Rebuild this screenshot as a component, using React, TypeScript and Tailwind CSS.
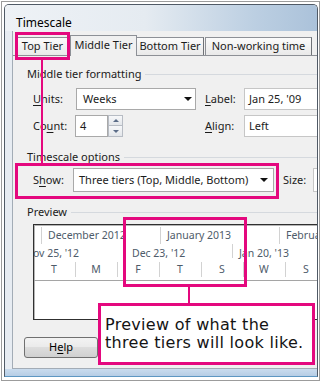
import React from "react";

const U = ({ children }: { children: React.ReactNode }) => (
  <span className="underline decoration-1 underline-offset-2">{children}</span>
);

function DownArrow() {
  return (
    <svg width="8" height="4" viewBox="0 0 8 4">
      <path d="M0 0h8L4 4z" fill="#111" />
    </svg>
  );
}

function Header({ text, mt }: { text: React.ReactNode; mt: string }) {
  return (
    <div className={`${mt} h-[14px] flex items-center pl-[14px] shrink-0`}>
      <span className="whitespace-nowrap leading-[14px]">{text}</span>
      <div className="flex-1 h-px bg-[#d5d9de] ml-[4px]" />
    </div>
  );
}

const PINK = "border-[#e4087e]";

export default function App() {
  const tierText = "text-[#4e5b6a]";
  return (
    <div className="relative w-[323px] h-[382px] bg-white pl-px pt-px overflow-hidden font-['Noto_Sans',sans-serif] text-[11px] text-[#1b1b1b]">
      <div className="w-[319px] h-[380px] border border-[#9c9c9c] pl-[2px] pt-[2px] pr-px pb-[3px]">
        <div className="h-full flex flex-col border border-[#505a66] border-b-[#5e97c2] rounded-t-[5px] overflow-hidden">
          {/* title bar */}
          <div className="h-[26px] shrink-0 pl-[11px] pt-[10px] leading-[16px] text-[12px] text-black bg-[linear-gradient(to_right,#eef2f6_0%,#e5ebf1_45%,#bccfe2_80%,#abc2da_100%)]">
            Timescale
          </div>
          <div className="h-[338px] shrink-0 flex">
            <div className="w-[7px] bg-[#e7ecf2]" />
            <div className="flex-1 min-w-0 bg-[#f0f0f0] border-l border-b border-[#a3acb6] flex flex-col overflow-hidden">
              {/* tabs */}
              <div className="h-[24px] shrink-0 flex items-end pl-[2px]">
                <div className="w-[55px] h-[18px] border border-b-0 border-[#8d9096] bg-[linear-gradient(#fbfbfb,#e9e9e9)] flex items-center justify-center whitespace-nowrap">
                  Top Tier
                </div>
                <div className="relative z-10 -mb-px w-[67px] h-[21px] border border-b-0 border-[#8d9096] bg-[#f0f0f0] flex items-center justify-center whitespace-nowrap pb-[2px]">
                  Middle Tier
                </div>
                <div className="w-[67px] h-[18px] border border-b-0 border-l-0 border-[#8d9096] border-r-[#6f7277] bg-[linear-gradient(#fbfbfb,#e9e9e9)] flex items-center justify-center whitespace-nowrap">
                  Bottom Tier
                </div>
                <div className="ml-px w-[107px] h-[18px] border border-b-0 border-[#8d9096] border-r-[#6f7277] bg-[linear-gradient(#fbfbfb,#e9e9e9)] flex items-center justify-center whitespace-nowrap">
                  Non-working time
                </div>
              </div>

              {/* panel */}
              <div className="h-[275px] shrink-0 border-t border-[#8d9096] flex flex-col">
                <Header mt="mt-[11px]" text="Middle tier formatting" />

                <div className="mt-[7px] h-[22px] flex items-center pl-[20px] shrink-0">
                  <span className="w-[43px] shrink-0">
                    <U>U</U>nits:
                  </span>
                  <div className="w-[120px] h-full shrink-0 bg-white border border-[#a9a9a9] flex items-center pl-[6px] pr-[3px]">
                    <span className="flex-1">Weeks</span>
                    <DownArrow />
                  </div>
                  <span className="ml-[9px] w-[39px] shrink-0">
                    <U>L</U>abel:
                  </span>
                  <div className="w-[120px] h-full shrink-0 bg-white border border-[#c6c6c6] flex items-center pl-[4px]">
                    Jan 25, '09
                  </div>
                </div>

                <div className="mt-[5px] h-[22px] flex items-center pl-[20px] shrink-0">
                  <span className="w-[42px] shrink-0">
                    Co<U>u</U>nt:
                  </span>
                  <div className="w-[33px] h-full shrink-0 bg-white border border-[#a9a9a9] flex items-center pl-[4px]">
                    4
                  </div>
                  <div className="w-[15px] h-full shrink-0 flex flex-col">
                    <div className="h-[11px] border border-[#b7bcc4] bg-[linear-gradient(#f7f8fa,#e3e6ea)] flex items-center justify-center">
                      <svg width="6" height="3" viewBox="0 0 6 3">
                        <path d="M0 3h6L3 0z" fill="#5b6c88" />
                      </svg>
                    </div>
                    <div className="h-[11px] border border-t-0 border-[#b7bcc4] bg-[linear-gradient(#f7f8fa,#e3e6ea)] flex items-center justify-center">
                      <svg width="6" height="3" viewBox="0 0 6 3">
                        <path d="M0 0h6L3 3z" fill="#5b6c88" />
                      </svg>
                    </div>
                  </div>
                  <span className="ml-[82px] w-[39px] shrink-0">
                    <U>A</U>lign:
                  </span>
                  <div className="w-[120px] h-full shrink-0 bg-white border border-[#c6c6c6] flex items-center pl-[4px]">
                    Left
                  </div>
                </div>

                <Header mt="mt-[13px]" text="Timescale options" />

                <div className="mt-[4px] h-[24px] flex items-center pl-[20px] shrink-0">
                  <span className="w-[40px] shrink-0">
                    S<U>h</U>ow:
                  </span>
                  <div className="w-[201px] h-full shrink-0 bg-white border border-[#a9a9a9] flex items-center pl-[5px] pr-[5px] whitespace-nowrap">
                    <span className="flex-1">Three tiers (Top, Middle, Bottom)</span>
                    <DownArrow />
                  </div>
                  <span className="ml-[9px] w-[30px] shrink-0">Size:</span>
                  <div className="w-[60px] h-full shrink-0 bg-white border border-[#c6c6c6]" />
                </div>

                <Header mt="mt-[13px]" text="Preview" />

                {/* preview box */}
                <div className="mt-[5px] ml-[20px] h-[96px] w-[290px] shrink-0 border-t border-l border-b border-[#303030] bg-white overflow-hidden flex flex-col text-[10.5px] shadow-[inset_1px_1px_0_#b5b5b5]">
                  <div className={`h-[19px] shrink-0 flex ml-[-112px] ${tierText}`}>
                    <div className="w-[119px] shrink-0" />
                    {["December 2012", "January 2013", "February 2013"].map((t) => (
                      <div key={t} className="w-[119px] shrink-0 flex items-stretch whitespace-nowrap">
                        <div className="w-px bg-[#d2d2d2] mt-[2px]" />
                        <span className="ml-[6px] self-center leading-[14px]">{t}</span>
                      </div>
                    ))}
                  </div>
                  <div className={`h-[18px] shrink-0 flex ml-[-16px] ${tierText}`}>
                    {["Nov 25, '12", "Dec 23, '12", "Jan 20, '13"].map((t) => (
                      <div key={t} className="w-[107px] shrink-0 flex items-start whitespace-nowrap">
                        <div className="w-px h-[14px] bg-[#d2d2d2]" />
                        <span className="ml-[6px] self-center leading-[14px]">{t}</span>
                      </div>
                    ))}
                  </div>
                  <div className={`h-[19px] shrink-0 flex ml-[-1px] border-b border-[#a5a5a5] ${tierText}`}>
                    {["T", "M", "F", "T", "S", "W", "S"].map((t, i) => (
                      <div key={i} className="w-[42px] shrink-0 flex items-start">
                        <div className="w-px h-[15px] bg-[#d2d2d2]" />
                        <span className="flex-1 text-center leading-[14px] pr-px">{t}</span>
                      </div>
                    ))}
                  </div>
                </div>
              </div>

              {/* help */}
              <div className="mt-[7px] ml-[11px] w-[74px] h-[21px] shrink-0 rounded-[3px] border border-[#707070] bg-[linear-gradient(#f3f3f3_0%,#ebebeb_45%,#dddddd_50%,#d0d0d0_100%)] flex items-center justify-center text-black">
                H<U>e</U>lp
              </div>
            </div>
          </div>
          <div className="flex-1 bg-[linear-gradient(#cadcee,#b6cde5)]" />
        </div>
      </div>

      {/* annotations */}
      <div className={`absolute left-[15px] top-[32px] w-[55px] h-[28px] border-[3px] ${PINK}`} />
      <div className="absolute left-[41px] top-[60px] w-[2px] h-[103px] bg-[#e4087e]" />
      <div className={`absolute left-[15px] top-[163px] w-[264px] h-[36px] border-[3px] ${PINK}`} />
      <div className={`absolute left-[123px] top-[217px] w-[124px] h-[70px] border-[3px] ${PINK}`} />
      <div className="absolute left-[188px] top-[287px] w-[2px] h-[16px] bg-[#e4087e]" />
      <div className={`absolute left-[98px] top-[303px] w-[217px] h-[62px] border-[3px] ${PINK} bg-white flex items-center pl-[4px] font-['DejaVu_Sans',sans-serif] text-[16px] tracking-[0.3px] leading-[18px] text-[#141414] whitespace-nowrap`}>
        <div>
          Preview of what the
          <br />
          three tiers will look like.
        </div>
      </div>
    </div>
  );
}
